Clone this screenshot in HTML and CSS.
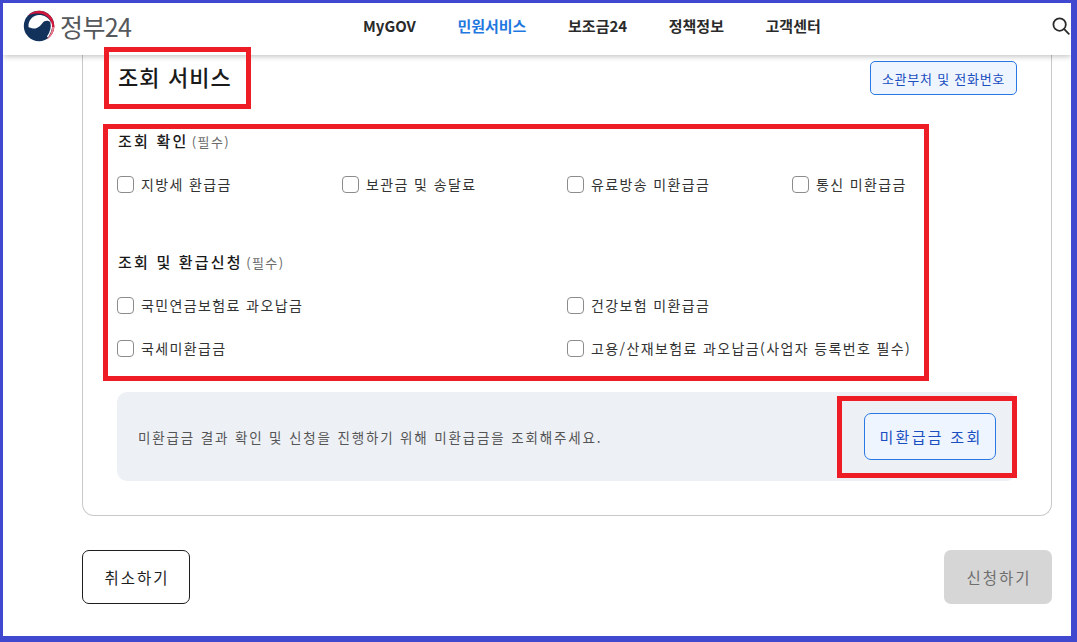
FILE: index.html
```html
<!DOCTYPE html>
<html lang="ko">
<head>
<meta charset="utf-8">
<title>정부24</title>
<link rel="stylesheet" href="styles.css">
</head>
<body>
<div class="frame">
  <header class="header">
    <a class="logo">
      <svg class="logo-mark" width="32" height="32" viewBox="0 0 32 32">
        <circle cx="16" cy="16" r="15.2" fill="#12325c"/>
        <path d="M5.5 17 C5 10 10 5 16 5 C21 5 26 7.5 28 12.5 C25 10 21.5 10.5 19.5 13 C17.5 16 14 19 10.5 18.5 C8 18 6.5 17.5 5.5 17Z" fill="#fff"/>
        <path d="M28 12 C29 16 28.6 21 24.5 27" fill="none" stroke="#fff" stroke-width="1.4"/>
        <path d="M4.5 6 A15.4 15.4 0 0 1 31.4 16 C31.4 21 28.8 26 24.5 29 C28 24.5 29.8 19.5 29 15 C28 8.5 22 3.6 15.5 3.6 C11 3.6 7.5 4.2 4.5 6Z" fill="#d3173a"/>
        <path d="M31.2 17 C31 22 28.5 26 24.5 29 L23.5 29.6 C27 26 28.8 22 29.2 17Z" fill="#ee7f8f"/>
      </svg>
      <span class="logo-text">정부24</span>
    </a>
    <nav class="nav">
      <a class="nav-item">MyGOV</a>
      <a class="nav-item is-active">민원서비스</a>
      <a class="nav-item">보조금24</a>
      <a class="nav-item">정책정보</a>
      <a class="nav-item">고객센터</a>
    </nav>
    <svg class="search" width="18" height="18" viewBox="0 0 18 18" fill="none" stroke="#2b2b2b" stroke-width="1.8">
      <circle cx="7.6" cy="7.6" r="6.2"/>
      <path d="M12.2 12.2 L16.8 16.8" stroke-linecap="round"/>
    </svg>
  </header>

  <main class="main">
    <section class="card">
      <div class="title-row">
        <h2 class="title">조회 서비스</h2>
        <button class="btn-small">소관부처 및 전화번호</button>
      </div>

      <h3 class="group-title first">조회 확인 <span class="req">(필수)</span></h3>
      <div class="opts opts-4">
        <label class="opt"><i class="box"></i>지방세 환급금</label>
        <label class="opt"><i class="box"></i>보관금 및 송달료</label>
        <label class="opt"><i class="box"></i>유료방송 미환급금</label>
        <label class="opt"><i class="box"></i>통신 미환급금</label>
      </div>

      <h3 class="group-title second">조회 및 환급신청 <span class="req">(필수)</span></h3>
      <div class="opts opts-2">
        <label class="opt"><i class="box"></i>국민연금보험료 과오납금</label>
        <label class="opt"><i class="box"></i>건강보험 미환급금</label>
        <label class="opt"><i class="box"></i>국세미환급금</label>
        <label class="opt"><i class="box"></i>고용/산재보험료 과오납금(사업자 등록번호 필수)</label>
      </div>

      <div class="notice">
        <p class="notice-text">미환급금 결과 확인 및 신청을 진행하기 위해 미환급금을 조회해주세요.</p>
        <button class="btn-query">미환급금 조회</button>
      </div>
    </section>

    <div class="actions">
      <button class="btn-cancel">취소하기</button>
      <button class="btn-apply">신청하기</button>
    </div>
  </main>

  <div class="mark mark-title"></div>
  <div class="mark mark-opts"></div>
  <div class="mark mark-query"></div>
</div>
</body>
</html>
```
FILE: styles.css
```css
* { box-sizing: border-box; }
html, body { margin: 0; padding: 0; }
body {
  width: 1077px;
  height: 642px;
  overflow: hidden;
  background: #4048cf;
  font-family: "Noto Sans CJK KR", "Noto Sans", sans-serif;
  color: #1e1e1e;
}
.frame {
  position: absolute;
  left: 3px;
  top: 3px;
  width: 1068px;
  height: 633px;
  background: #fff;
  overflow: hidden;
}
.header {
  position: relative;
  z-index: 2;
  height: 52px;
  background: #fff;
  box-shadow: 0 1px 6px rgba(0, 0, 0, .28);
  display: flex;
  align-items: center;
  padding: 0 0 6px 20px;
}
.logo { display: flex; align-items: center; gap: 5px; width: 340px; }
.logo-text {
  font-size: 25px;
  font-weight: 400;
  color: #55585c;
  letter-spacing: -.6px;
  line-height: 1;
}
.nav { display: flex; gap: 41.6px; }
.nav-item { font-size: 15px; font-weight: 700; color: #2a2a2a; line-height: 20px; }
.nav-item.is-active { color: #1f78e0; }
.search { margin-left: auto; margin-right: 1px; }

.main { padding: 0 19px 0 79px; }
.card {
  height: 461px;
  border: 1px solid #c8c8c8;
  border-top: 0;
  border-radius: 0 0 12px 12px;
  padding: 0 34px;
}
.title-row {
  display: flex;
  justify-content: space-between;
  align-items: flex-start;
  height: 75px;
  padding-top: 6px;
}
.title { margin: 0 0 0 1px; font-size: 22px; font-weight: 500; line-height: 30px; letter-spacing: 1.1px; color: #1a1a1a; }
.btn-small {
  width: 147px;
  height: 34px;
  border: 1px solid #2a78e4;
  border-radius: 5px;
  background: #eef5ff;
  color: #1b4fc0;
  font: 400 13px "Noto Sans CJK KR", sans-serif;
  letter-spacing: .75px;
  padding: 0;
}
.group-title { margin: 0 0 0 1px; font-size: 15px; font-weight: 500; line-height: 22px; color: #1a1a1a; letter-spacing: 2.2px; }
.group-title.second { margin-top: 56px; }
.req { margin-left: -3px; font-size: 13px; font-weight: 400; color: #6b6b6b; letter-spacing: 1.4px; }
.opts { display: grid; margin-top: 20px; }
.opts-4 { grid-template-columns: repeat(4, 225px); }
.opts-2 { grid-template-columns: repeat(2, 450px); row-gap: 21px; margin-top: 20px; }
.opt {
  display: flex;
  align-items: center;
  gap: 7px;
  height: 22px;
  font-size: 14px;
  line-height: 22px;
  color: #333;
  letter-spacing: 1.38px;
  white-space: nowrap;
}
.box {
  flex: none;
  width: 17px;
  height: 17px;
  border: 1.5px solid #8c8c8c;
  border-radius: 4px;
  background: #fff;
}
.notice {
  display: flex;
  align-items: center;
  justify-content: space-between;
  height: 89px;
  margin-top: 33px;
  padding: 0 21px;
  background: #edf0f5;
  border-radius: 10px;
  width: 900px;
}
.notice-text { margin: 0; font-size: 13.5px; color: #555; letter-spacing: 1.85px; }
.btn-query {
  width: 132px;
  height: 47px;
  border: 1px solid #2a78e4;
  border-radius: 7px;
  background: #eef5ff;
  color: #1b4fc0;
  font: 400 15px "Noto Sans CJK KR", sans-serif;
  letter-spacing: 2.3px;
  padding: 0 0 0 2px;
}
.actions { display: flex; justify-content: space-between; margin-top: 34px; }
.btn-cancel, .btn-apply {
  height: 54px;
  border-radius: 7px;
  font: 400 15.5px "Noto Sans CJK KR", sans-serif;
  letter-spacing: 2px;
  padding: 0 0 0 2px;
}
.btn-cancel { width: 108px; border: 1px solid #1e1e1e; background: #fff; color: #1e1e1e; }
.btn-apply { width: 108px; border: 0; background: #d6d6d6; color: #6f6f6f; }

.mark { position: absolute; z-index: 3; border: 5px solid #ee1c25; pointer-events: none; }
.mark-title { left: 101px; top: 44px; width: 147px; height: 62px; }
.mark-opts { left: 100px; top: 121px; width: 826px; height: 257px; }
.mark-query { left: 834px; top: 393px; width: 180px; height: 82px; }
```
